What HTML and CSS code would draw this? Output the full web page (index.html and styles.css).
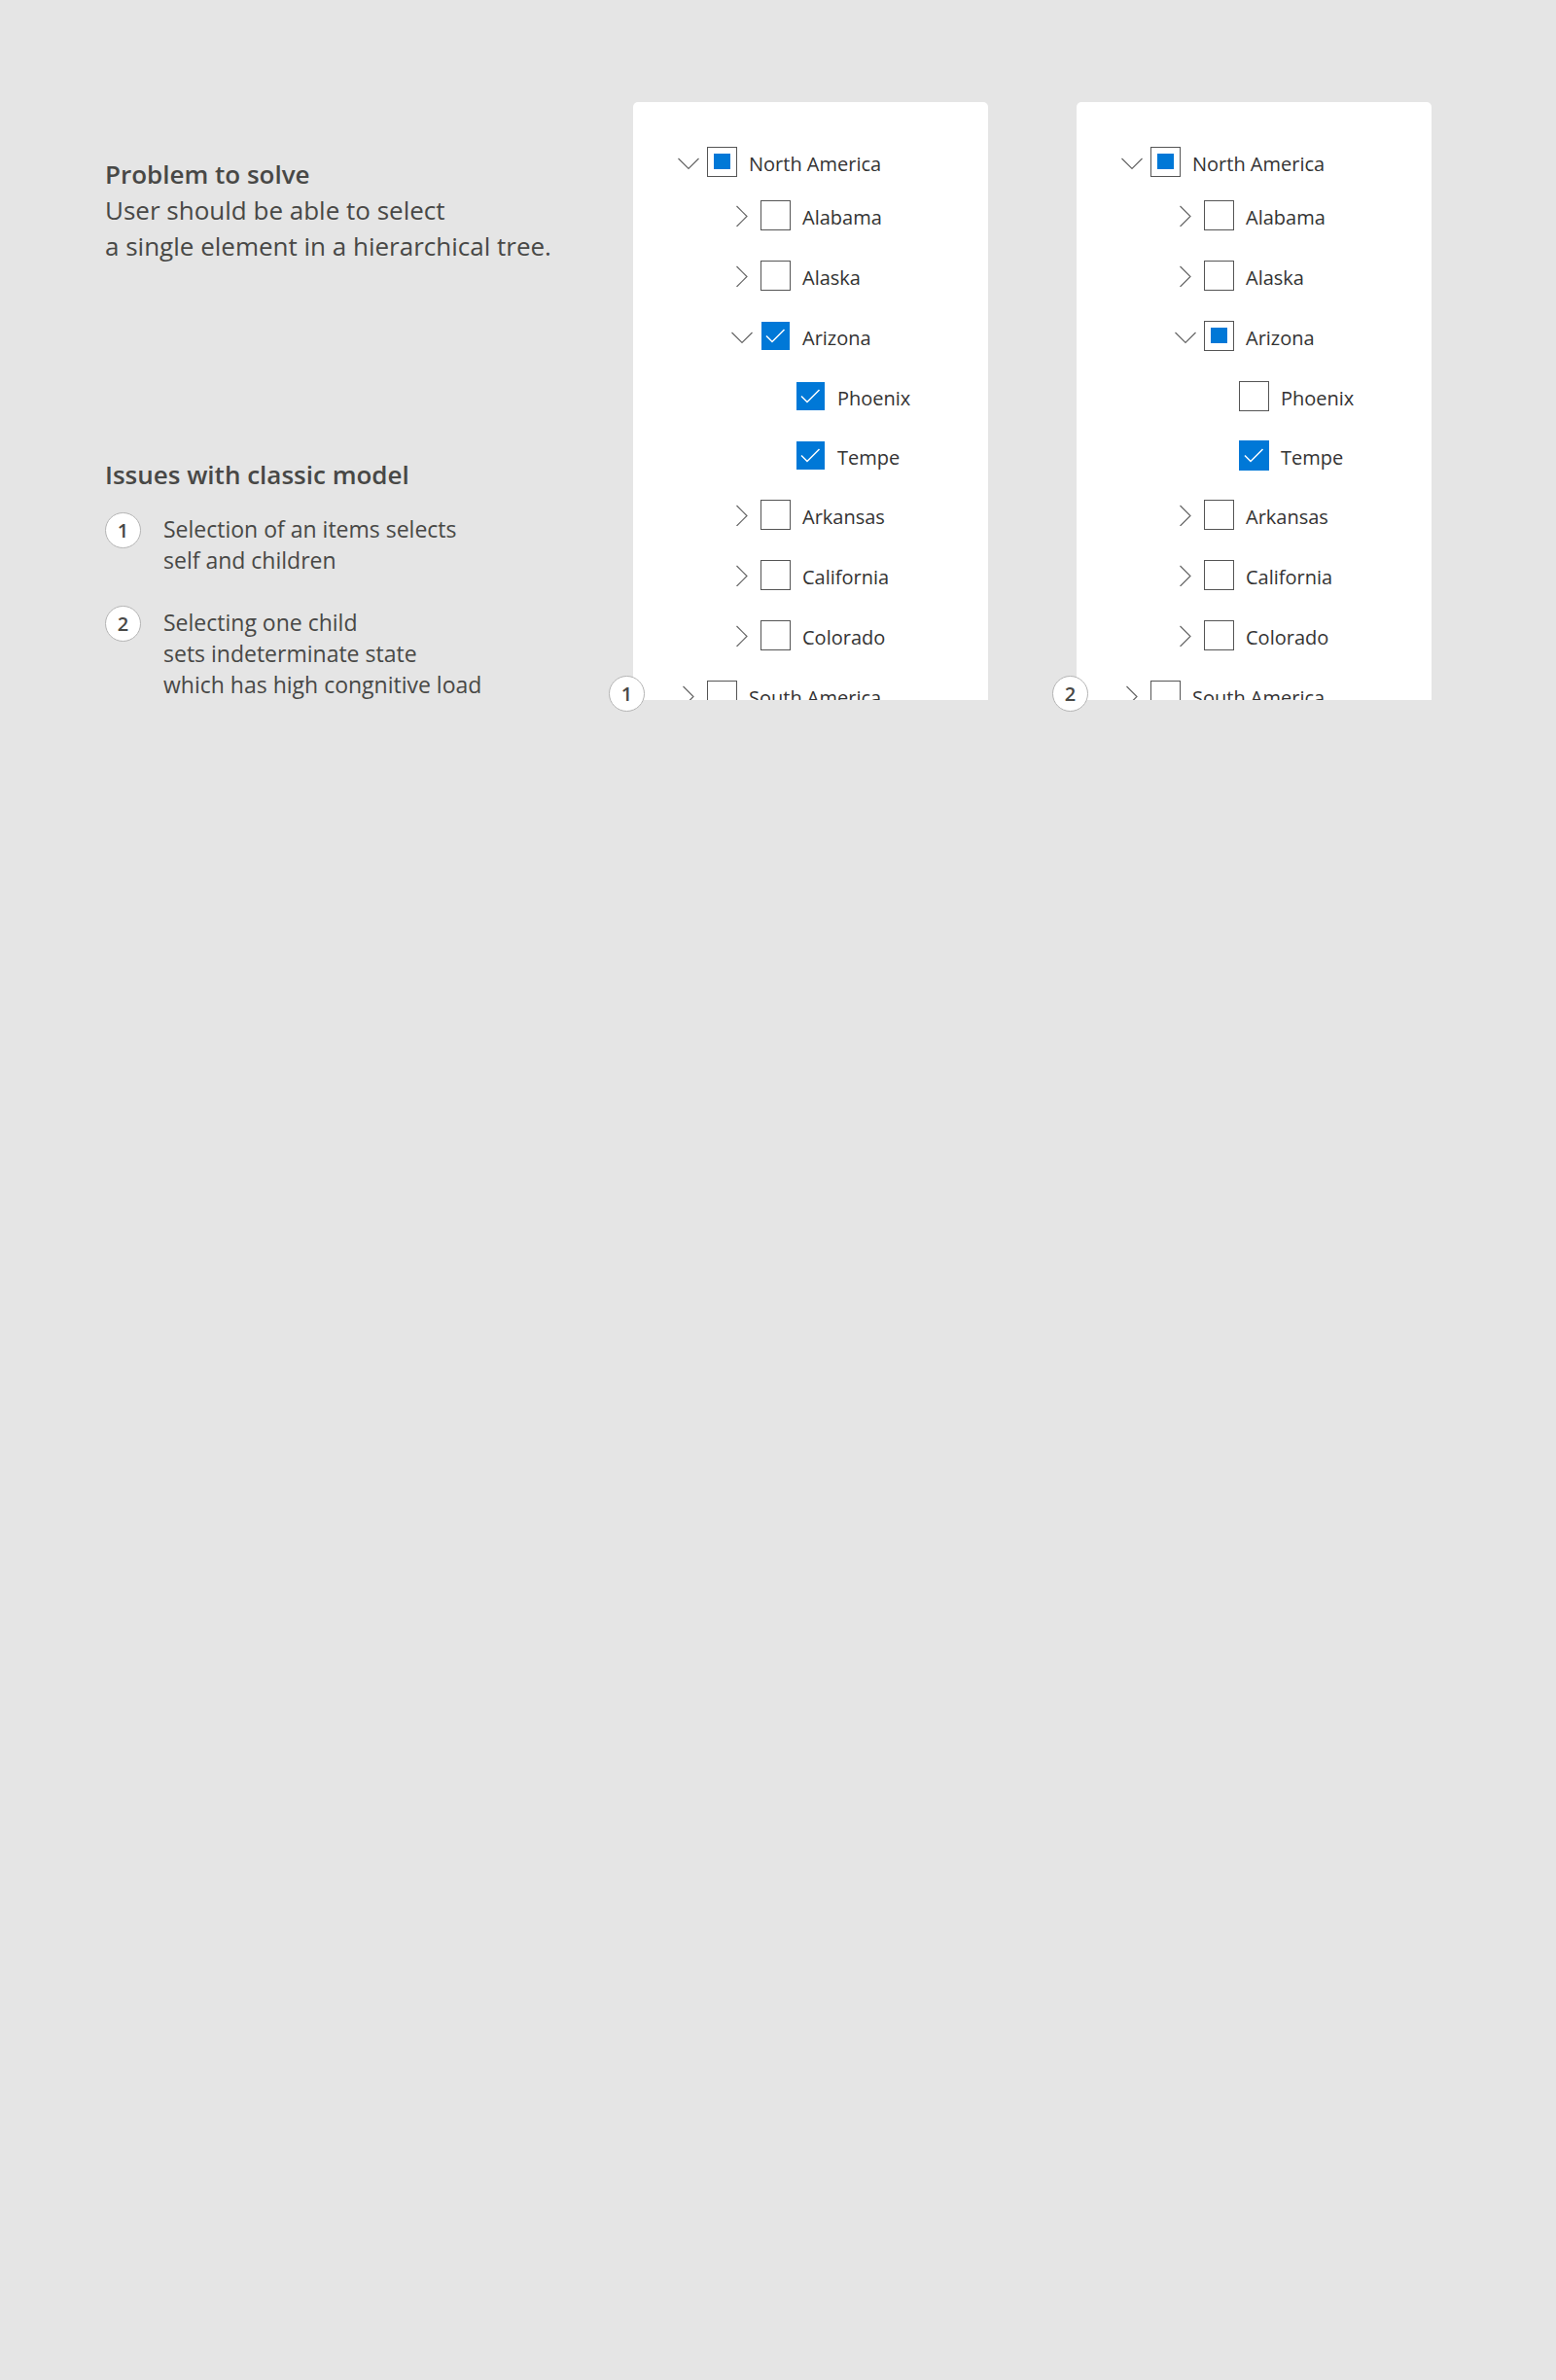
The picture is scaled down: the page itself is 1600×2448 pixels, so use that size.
FILE: index.html
```html
<!DOCTYPE html>
<html lang="en">
<head>
<meta charset="utf-8">
<title>Hierarchical tree selection</title>
<link rel="stylesheet" href="styles.css">
</head>
<body>
<svg class="sprite" aria-hidden="true">
  <symbol id="down" viewBox="0 0 22 22"><path d="M0.5 7 L11 17.5 L21.5 7"/></symbol>
  <symbol id="right" viewBox="0 0 22 22"><path d="M5.5 1 L16 11.5 L5.5 22"/></symbol>
</svg>
<main class="stage">
  <div class="notes">
    <section>
      <h1 class="heading">Problem to solve</h1>
      <p class="lead">User should be able to select<br>a single element in a hierarchical tree.</p>
    </section>
    <section class="issues">
      <h2 class="heading">Issues with classic model</h2>
      <ol class="issue-list">
        <li class="issue"><span class="badge">1</span><p class="issue-text">Selection of an items selects<br>self and children</p></li>
        <li class="issue"><span class="badge">2</span><p class="issue-text">Selecting one child<br>sets indeterminate state<br>which has high congnitive load</p></li>
      </ol>
    </section>
  </div>
  <div class="examples">
    <section class="example">
      <div class="card card-compact">
        <ul class="tree">
          <li>
            <div class="row root"><button class="toggle" type="button" aria-label="Collapse North America"><svg><use href="#down"/></svg></button><input class="box" type="checkbox" aria-checked="mixed" id="a-na"><label for="a-na">North America</label></div>
            <ul class="branch">
              <li><div class="row"><button class="toggle" type="button" aria-label="Expand Alabama"><svg><use href="#right"/></svg></button><input class="box" type="checkbox" id="a-al"><label for="a-al">Alabama</label></div></li>
              <li><div class="row"><button class="toggle" type="button" aria-label="Expand Alaska"><svg><use href="#right"/></svg></button><input class="box" type="checkbox" id="a-ak"><label for="a-ak">Alaska</label></div></li>
              <li>
                <div class="row"><button class="toggle" type="button" aria-label="Collapse Arizona"><svg><use href="#down"/></svg></button><input class="box" type="checkbox" checked id="a-az"><label for="a-az">Arizona</label></div>
                <ul class="leaves">
                  <li><div class="row leaf"><input class="box" type="checkbox" checked id="a-ph"><label for="a-ph">Phoenix</label></div></li>
                  <li><div class="row leaf"><input class="box" type="checkbox" checked id="a-te"><label for="a-te">Tempe</label></div></li>
                </ul>
              </li>
              <li><div class="row"><button class="toggle" type="button" aria-label="Expand Arkansas"><svg><use href="#right"/></svg></button><input class="box" type="checkbox" id="a-ar"><label for="a-ar">Arkansas</label></div></li>
              <li><div class="row"><button class="toggle" type="button" aria-label="Expand California"><svg><use href="#right"/></svg></button><input class="box" type="checkbox" id="a-ca"><label for="a-ca">California</label></div></li>
              <li><div class="row"><button class="toggle" type="button" aria-label="Expand Colorado"><svg><use href="#right"/></svg></button><input class="box" type="checkbox" id="a-co"><label for="a-co">Colorado</label></div></li>
            </ul>
          </li>
          <li><div class="row root"><button class="toggle" type="button" aria-label="Expand South America"><svg><use href="#right"/></svg></button><input class="box" type="checkbox" id="a-sa"><label for="a-sa">South America</label></div></li>
        </ul>
      </div>
      <span class="badge pinned">1</span>
    </section>
    <section class="example">
      <div class="card">
        <ul class="tree">
          <li>
            <div class="row root"><button class="toggle" type="button" aria-label="Collapse North America"><svg><use href="#down"/></svg></button><input class="box" type="checkbox" aria-checked="mixed" id="b-na"><label for="b-na">North America</label></div>
            <ul class="branch">
              <li><div class="row"><button class="toggle" type="button" aria-label="Expand Alabama"><svg><use href="#right"/></svg></button><input class="box" type="checkbox" id="b-al"><label for="b-al">Alabama</label></div></li>
              <li><div class="row"><button class="toggle" type="button" aria-label="Expand Alaska"><svg><use href="#right"/></svg></button><input class="box" type="checkbox" id="b-ak"><label for="b-ak">Alaska</label></div></li>
              <li>
                <div class="row"><button class="toggle" type="button" aria-label="Collapse Arizona"><svg><use href="#down"/></svg></button><input class="box" type="checkbox" aria-checked="mixed" id="b-az"><label for="b-az">Arizona</label></div>
                <ul class="leaves">
                  <li><div class="row leaf"><input class="box" type="checkbox" id="b-ph"><label for="b-ph">Phoenix</label></div></li>
                  <li><div class="row leaf"><input class="box" type="checkbox" checked id="b-te"><label for="b-te">Tempe</label></div></li>
                </ul>
              </li>
              <li><div class="row"><button class="toggle" type="button" aria-label="Expand Arkansas"><svg><use href="#right"/></svg></button><input class="box" type="checkbox" id="b-ar"><label for="b-ar">Arkansas</label></div></li>
              <li><div class="row"><button class="toggle" type="button" aria-label="Expand California"><svg><use href="#right"/></svg></button><input class="box" type="checkbox" id="b-ca"><label for="b-ca">California</label></div></li>
              <li><div class="row"><button class="toggle" type="button" aria-label="Expand Colorado"><svg><use href="#right"/></svg></button><input class="box" type="checkbox" id="b-co"><label for="b-co">Colorado</label></div></li>
            </ul>
          </li>
          <li><div class="row root"><button class="toggle" type="button" aria-label="Expand South America"><svg><use href="#right"/></svg></button><input class="box" type="checkbox" id="b-sa"><label for="b-sa">South America</label></div></li>
        </ul>
      </div>
      <span class="badge pinned">2</span>
    </section>
  </div>
</main>
</body>
</html>
```
FILE: styles.css
```css
* { box-sizing: border-box; }

body {
  margin: 0;
  min-height: 100vh;
  background: #e5e5e5;
  color: #484846;
  font-family: "Segoe UI", "Open Sans", "Noto Sans", sans-serif;
}

h1, h2, p, ul, ol { margin: 0; padding: 0; }
ul, ol { list-style: none; }

.sprite { display: none; }

.stage {
  display: flex;
  padding: 105px 128px 105px 108px;
}

/* Explanatory text */
.notes {
  flex: 543 1 0;
  min-width: 0;
  display: flex;
  flex-direction: column;
  justify-content: space-between;
  padding-top: 56px;
  white-space: nowrap;
}

.heading { font-size: 26px; line-height: 37px; font-weight: 600; }
.lead { font-size: 26px; line-height: 37px; }

.issues { display: flex; flex-direction: column; gap: 20px; }
.issue-list { display: flex; flex-direction: column; gap: 31px; }
.issue { display: flex; align-items: flex-start; gap: 23px; }
.issue-text { padding-top: 1px; font-size: 23px; line-height: 32px; }

.badge {
  flex: none;
  display: grid;
  place-items: center;
  width: 37px;
  height: 37px;
  border: 1px solid #b4b4b4;
  border-radius: 50%;
  background: #fff;
  font-size: 20px;
  line-height: 32px;
  font-weight: 600;
}

/* Tree cards */
.examples {
  flex: 821 1 0;
  min-width: 0;
  display: flex;
  gap: 91px;
}
.example { flex: 1 1 0; min-width: 0; position: relative; }
.pinned { position: absolute; left: -25px; bottom: -12px; }

.card {
  height: 615px;
  overflow: hidden;
  padding: 36px 0 0 46px;
  border-radius: 5px 5px 0 0;
  background: #fff;
  color: #333;
}

.tree { display: flex; flex-direction: column; gap: 5px; }
.branch { padding-left: 55px; }
.leaves { padding-left: 66px; }

.row {
  display: flex;
  align-items: center;
  padding: 15px 0 16px;
  font-size: 20px;
  line-height: 27px;
  white-space: nowrap;
}
.row.root { padding: 10px 0 9px; }
.row.leaf { padding: 15px 0; }
.row label { padding: 4px 0 0 12px; }

.toggle {
  width: 22px;
  height: 22px;
  margin-right: 8px;
  padding: 0;
  border: 0;
  background: none;
}
.toggle svg {
  display: block;
  width: 22px;
  height: 22px;
  overflow: visible;
  fill: none;
  stroke: #666;
  stroke-width: 1.2;
}

.box {
  appearance: none;
  flex: none;
  width: 31px;
  height: 31px;
  margin: 0;
  border: 1px solid #555;
  background: #fff no-repeat;
}
.box[aria-checked="mixed"] {
  background-image: linear-gradient(#0078d7, #0078d7);
  background-size: 17px 16px;
  background-position: 6px 6px;
}
.box:checked {
  border-color: #0078d7;
  background-color: #0078d7;
  background-image: url("data:image/svg+xml,%3Csvg xmlns='http://www.w3.org/2000/svg' width='29' height='29'%3E%3Cpath d='M5 14.5L11 20.5L23.5 8' fill='none' stroke='white' stroke-width='1.5'/%3E%3C/svg%3E");
}
.card-compact .box:checked { border-color: #fff; }
```
